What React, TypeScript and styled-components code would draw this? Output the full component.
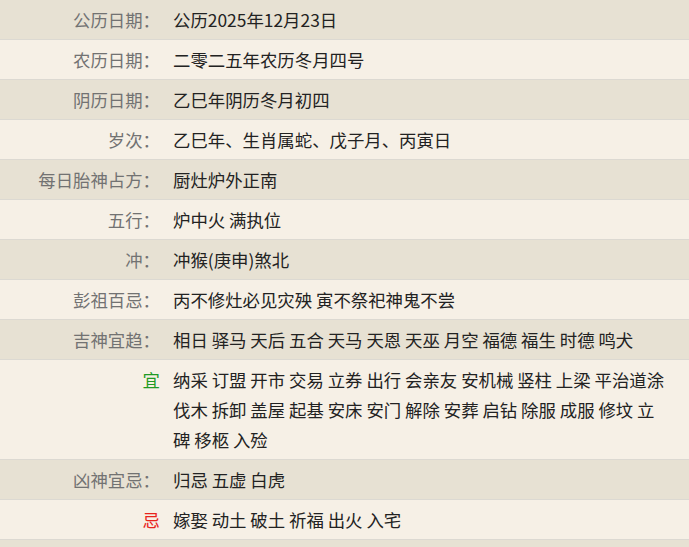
import styled, { createGlobalStyle } from 'styled-components';

const GlobalStyle = createGlobalStyle`
  html, body {
    margin: 0;
    padding: 0;
    background: #f6f0e6;
  }
  body {
    font-family: "Noto Sans CJK SC", "Noto Sans", sans-serif;
  }
`;

const ScTable = styled.div`
  display: flex;
  flex-direction: column;
  width: 689px;
  height: 547px;
  overflow: hidden;
`;

const ScRow = styled.div<{ $alt: boolean }>`
  display: grid;
  grid-template-columns: 166px 1fr;
  background: ${p => (p.$alt ? '#e7e1d3' : '#f6f0e6')};
  border-bottom: 1px solid #dcd9d2;
  flex-shrink: 0;
`;

const ScLabel = styled.div<{ $tone?: 'yi' | 'ji' }>`
  padding: 5px 6px 4px 0;
  text-align: right;
  font-size: 17.4px;
  line-height: 30px;
  color: ${p => (p.$tone === 'yi' ? '#1f9a24' : p.$tone === 'ji' ? '#e8231c' : '#727272')};
`;

const ScValue = styled.div`
  padding: 5px 19px 4px 7px;
  font-size: 17.4px;
  line-height: 30px;
  color: #222;
  word-break: break-all;
  min-height: 30px;
`;

type Item = { label: string; value: string; tone?: 'yi' | 'ji' };

const items: Item[] = [
  { label: '公历日期：', value: '公历2025年12月23日' },
  { label: '农历日期：', value: '二零二五年农历冬月四号' },
  { label: '阴历日期：', value: '乙巳年阴历冬月初四' },
  { label: '岁次：', value: '乙巳年、生肖属蛇、戊子月、丙寅日' },
  { label: '每日胎神占方：', value: '厨灶炉外正南' },
  { label: '五行：', value: '炉中火 满执位' },
  { label: '冲：', value: '冲猴(庚申)煞北' },
  { label: '彭祖百忌：', value: '丙不修灶必见灾殃 寅不祭祀神鬼不尝' },
  { label: '吉神宜趋：', value: '相日 驿马 天后 五合 天马 天恩 天巫 月空 福德 福生 时德 鸣犬' },
  {
    label: '宜',
    tone: 'yi',
    value:
      '纳采 订盟 开市 交易 立券 出行 会亲友 安机械 竖柱 上梁 平治道涂 伐木 拆卸 盖屋 起基 安床 安门 解除 安葬 启钻 除服 成服 修坟 立碑 移柩 入殓',
  },
  { label: '凶神宜忌：', value: '归忌 五虚 白虎' },
  { label: '忌', tone: 'ji', value: '嫁娶 动土 破土 祈福 出火 入宅' },
  { label: '', value: '' },
];

function App() {
  return (
    <>
      <GlobalStyle />
      <ScTable>
        {items.map((it, i) => (
          <ScRow key={i} $alt={i % 2 === 0}>
            <ScLabel $tone={it.tone}>{it.label}</ScLabel>
            <ScValue>{it.value}</ScValue>
          </ScRow>
        ))}
      </ScTable>
    </>
  );
}

export default App;
